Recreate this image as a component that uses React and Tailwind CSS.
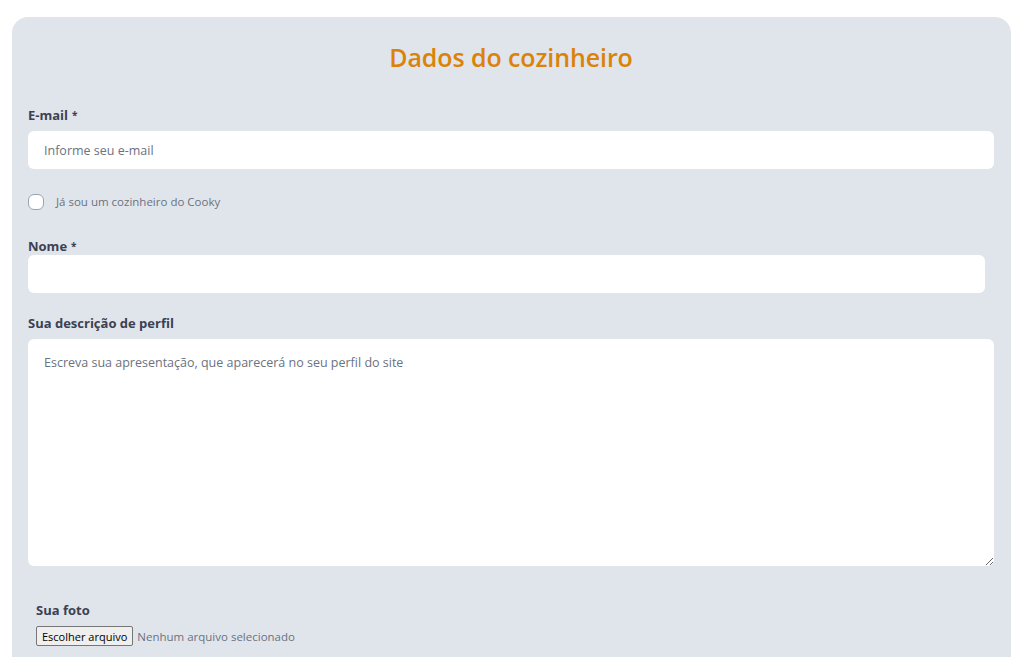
import React from 'react';

const font = { fontFamily: '"Open Sans", "Noto Sans", sans-serif' };

const Label = ({ children, required }) => (
  <label className="block text-[13px] font-bold text-[#3b4151] leading-4">
    {children}
    {required && <span className="ml-1 text-[10px] align-top">*</span>}
  </label>
);

const App = () => {
  return (
    <div className="min-h-screen bg-white pt-[17px] pl-3 pr-[13px]" style={font}>
      <div className="bg-[#e0e5ec] rounded-t-2xl pl-4 pr-[17px] pt-[24px] pb-3 min-h-[640px]">
        <h1 className="text-center text-[25px] leading-8 text-[#db8309] font-semibold tracking-[-0.1px]">
          Dados do cozinheiro
        </h1>

        <div className="mt-[34px]">
          <Label required>E-mail</Label>
          <input
            type="email"
            placeholder="Informe seu e-mail"
            className="mt-2 w-full h-[38px] rounded-md bg-white px-4 text-[12.5px] text-[#4b5563] placeholder:text-[#6b7280] outline-none"
          />
        </div>

        <div className="mt-[24px] flex items-center gap-3">
          <input type="checkbox" className="appearance-none w-4 h-4 rounded-[6px] border border-[#9ca3b5] bg-white" />
          <span className="text-[11.5px] text-[#6b7280]">Já sou um cozinheiro do Cooky</span>
        </div>

        <div className="mt-[28px]">
          <Label required>Nome</Label>
          <input
            type="text"
            className="mt-[1px] w-[957px] h-[38px] rounded-md bg-white px-4 text-[12.5px] outline-none"
          />
        </div>

        <div className="mt-[22px]">
          <Label>Sua descrição de perfil</Label>
          <textarea
            placeholder="Escreva sua apresentação, que aparecerá no seu perfil do site"
            className="mt-2 block w-full h-[227px] rounded-md bg-white px-4 py-[15px] text-[12.5px] text-[#4b5563] placeholder:text-[#6b7280] outline-none"
          />
        </div>

        <div className="mt-[36px] px-2">
          <Label>Sua foto</Label>
          <div className="mt-2 flex items-center gap-1">
            <button className="h-5 px-[5px] border border-[#767676] rounded-[2px] bg-[#efefef] text-[11px] leading-none text-black">
              Escolher arquivo
            </button>
            <span className="text-[11.5px] text-[#6b7280]">Nenhum arquivo selecionado</span>
          </div>
        </div>
      </div>
    </div>
  );
};

export default App;
